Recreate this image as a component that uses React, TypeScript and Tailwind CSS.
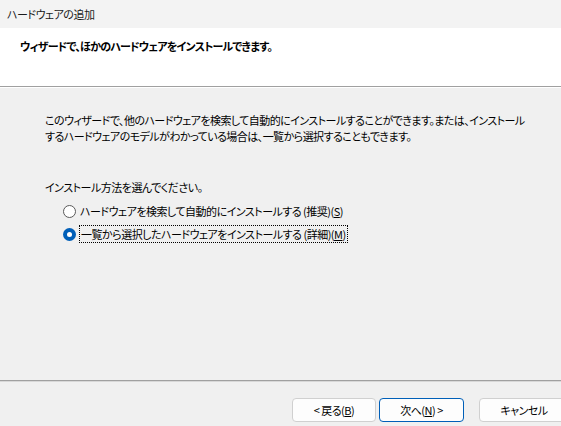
import React from "react";

const font = {
  fontFamily: '"Noto Sans CJK JP", "Noto Sans", sans-serif',
  fontFeatureSettings: '"palt"',
};

export default function App() {
  return (
    <div className="w-[561px] h-[426px] flex flex-col bg-[#f0f0f0] text-black text-[11px] tracking-[-0.5px] overflow-hidden" style={font}>
      <div className="h-[28px] bg-[#f3f3f3] flex items-center pl-[7px] text-[#1a1a1a]">ハードウェアの追加</div>
      <div className="h-[58px] bg-white pl-[20px] pt-[9px] font-bold tracking-[-0.8px] leading-[18px] whitespace-nowrap">ウィザードで、ほかのハードウェアをインストールできます。</div>
      <div className="h-px bg-[#a0a0a0]" />
      <div className="h-px bg-white" />
      <div className="flex-1 flex flex-col pl-[45px] pt-[24px]">
        <p className="leading-[16px] whitespace-nowrap tracking-[-0.55px]">
          このウィザードで、他のハードウェアを検索して自動的にインストールすることができます。または、インストール
          <br />
          するハードウェアのモデルがわかっている場合は、一覧から選択することもできます。
        </p>
        <p className="mt-[35px] leading-[16px] whitespace-nowrap">インストール方法を選んでください。</p>
        <div className="mt-[8px] pl-[18px] flex flex-col gap-[7px]">
          <div className="flex items-center h-[16px] gap-[4px]">
            <span className="w-[13px] h-[13px] rounded-full border border-[#5a5a5a] bg-white box-border" />
            <span className="whitespace-nowrap">ハードウェアを検索して自動的にインストールする (推奨)(<u>S</u>)</span>
          </div>
          <div className="flex items-center h-[16px] gap-[3px]">
            <span className="w-[13px] h-[13px] rounded-full bg-[#005fb8] flex items-center justify-center">
              <span className="w-[5px] h-[5px] rounded-full bg-white" />
            </span>
            <span className="whitespace-nowrap border border-dotted border-black px-[1px] leading-[16px]">一覧から選択したハードウェアをインストールする (詳細)(<u>M</u>)</span>
          </div>
        </div>
      </div>
      <div className="h-px bg-[#a0a0a0]" />
      <div className="h-px bg-[#d8d8d8]" />
      <div className="h-[44px] flex items-start pt-[16px] pl-[292px] gap-[3px] overflow-hidden">
        <button className="shrink-0 w-[84px] h-[24px] rounded-[4px] border border-[#d0d0d0] bg-[#fdfdfd] flex items-center justify-center tracking-[-0.5px]" style={font}>
          &lt; 戻る(<u>B</u>)
        </button>
        <button className="shrink-0 w-[85px] h-[24px] rounded-[4px] border border-[#005fb8] bg-[#fdfdfd] flex items-center justify-center tracking-[-0.5px]" style={font}>
          次へ(<u>N</u>) &gt;
        </button>
        <button className="shrink-0 ml-[12px] w-[90px] h-[24px] rounded-[4px] border border-[#d0d0d0] bg-[#fdfdfd] flex items-center justify-center tracking-[-0.5px]" style={font}>
          キャンセル
        </button>
      </div>
    </div>
  );
}
